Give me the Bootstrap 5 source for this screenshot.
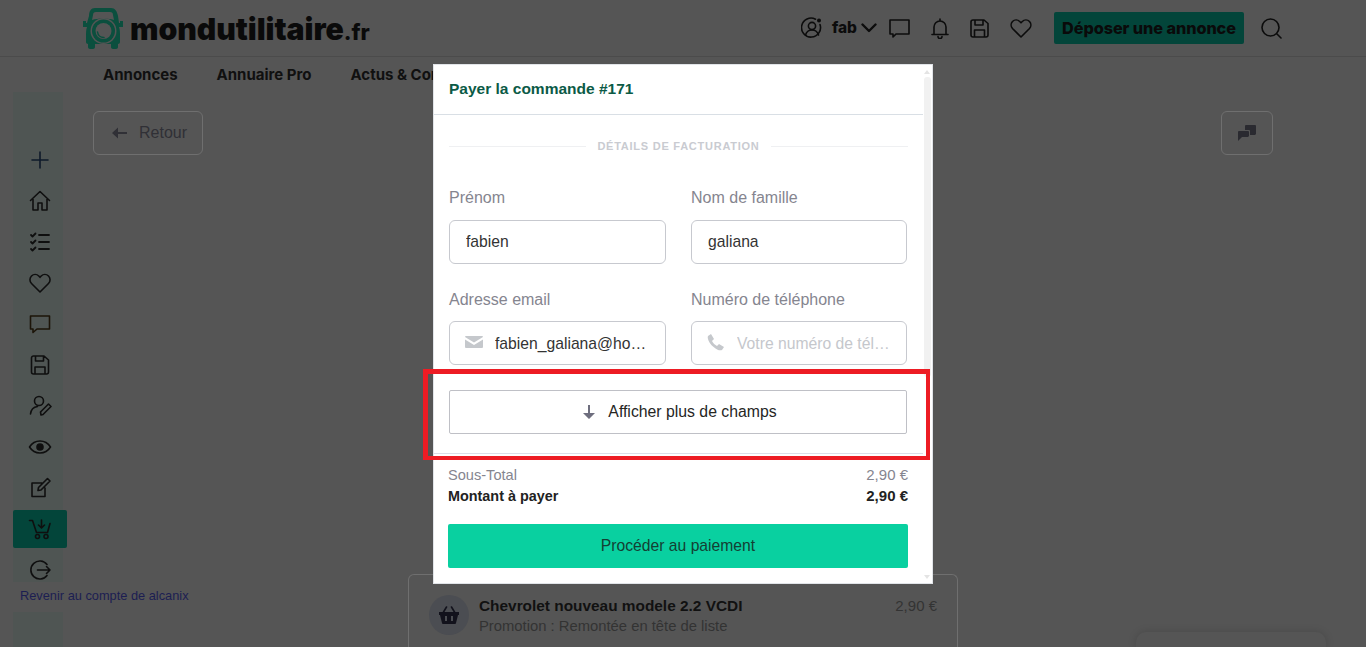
<!DOCTYPE html>
<html lang="fr">
<head>
<meta charset="UTF-8" />
<meta name="viewport" content="width=device-width, initial-scale=1.0" />
<title>Payer la commande</title>
<link href="https://cdn.jsdelivr.net/npm/bootstrap@5.3.0/dist/css/bootstrap.min.css" rel="stylesheet" />
<style>
  html, body { height: 647px; overflow: hidden; }
  body { background: #555; font-family: "Liberation Sans", Arial, sans-serif; color: #0c0c0c; font-size: 16px; }
  svg { display: block; fill: none; stroke: currentColor; stroke-width: 1.6; stroke-linecap: round; stroke-linejoin: round; }

  .top-bar { height: 57px; border-bottom: 1px solid #4b4b4b; padding: 0 84px 0 83px; }
  .logo-word { font-family: Inter, sans-serif; font-weight: 900; font-size: 30.2px; letter-spacing: -.05px; line-height: 1; margin: 3px 0 0 6px; color: #0a0a0a; }
  .logo-word span { font-size: 22px; font-weight: 800; }
  .user-name { font-family: Inter, sans-serif; font-weight: 800; font-size: 15.5px; margin-left: 9px; }
  .post-btn { background: #03453a; color: #0a0a0a; font-family: Inter, sans-serif; font-weight: 800; font-size: 16.3px; height: 32px; width: 190px; border-radius: 2px; letter-spacing: -.1px; padding-top: 1px; }

  .menu-bar { height: 35px; padding: 2px 0 0 103px; gap: 39px; font-family: Inter, sans-serif; font-weight: 700; font-size: 15px; color: #101010; }

  .side-col { width: 50px; margin-left: 13px; flex: none; }
  .side-bar { height: 490px; background: #4f5553; padding-top: 49px; }
  .side-item { height: 38px; width: 54px; margin-bottom: 3px; padding-left: 15px; color: #0f0f0f; border-radius: 2px; }
  .side-item.is-on { background: #03453a; }
  .back-link { display: block; white-space: nowrap; font-size: 12.8px; color: #1c1e52; margin: 6px 0 0 7px; line-height: 15px; text-decoration: none; }
  .side-tail { height: 35px; margin-top: 9px; background: #4f5553; }

  .main-col { padding: 19px 93px 0 30px; height: 555px; }
  .ghost-btn { height: 44px; border: 1px solid #6f6f6f; border-radius: 6px; color: #303036; background: transparent; }
  .ghost-back { width: 110px; padding-left: 18px; gap: 12px; font-size: 16px; }
  .ghost-chat { width: 52px; }
  .order-card { width: 550px; height: 73px; margin: 419px 0 0 315px; border: 1px solid #6f6f6f; border-bottom: 0; border-radius: 6px 6px 0 0; padding: 20px 20px 0 20px; }
  .basket-dot { width: 40px; height: 40px; border-radius: 50%; background: #4b4d52; color: #12121c; margin-right: 10px; flex: none; }
  .order-title { font-weight: 700; font-size: 15.4px; line-height: 21px; color: #111; }
  .order-sub { font-size: 14.8px; line-height: 20px; color: #333; }
  .order-price { font-size: 15px; color: #333; line-height: 21px; }
  .chat-peek { position: fixed; left: 1136px; top: 632px; width: 190px; height: 15px; border-radius: 10px 10px 0 0; background: #555; box-shadow: 0 0 8px rgba(0,0,0,.16); }

  .pay-modal { position: fixed; left: 433px; top: 64px; width: 500px; height: 520px; background: #fff; border: 1px solid #e1e4e8; }
  .pay-head { height: 50px; width: 489px; border-bottom: 1px solid #d9dfe5; padding: 0 0 2px 15px; font-weight: 700; font-size: 15.5px; color: #0b5a46; }
  .pay-body { padding: 0 24px 0 15px; width: 498px; }
  .split-title { height: 63px; gap: 11px; font-size: 11px; font-weight: 700; letter-spacing: .75px; color: #c9cbd1; white-space: nowrap; }
  .split-title i { flex: 1; height: 1px; background: #eff0f2; }
  .field-grid { display: grid; grid-template-columns: 217px 216px; column-gap: 25px; }
  .field-label { font-size: 16px; color: #85858f; line-height: 20px; margin: 10px 0 12px; }
  .field-row2 .field-label { margin: 26px 0 11px; }
  .field-box { height: 44px; border-radius: 6px; border: 1px solid #c7c9cf; padding: 0 16px; color: #333; font-size: 15.7px; box-shadow: none; text-overflow: ellipsis; font-family: inherit; }
  .field-box.has-ico { padding: 1px 16px 0 45px; }
  .field-box::placeholder { color: #c5c7cc; opacity: 1; }
  .field-ico { position: absolute; left: 16px; top: 14px; color: #c5c8cc; }
  .more-btn { height: 44px; width: 458px; margin-top: 25px; padding-left: 10px; background: #fff; border: 1px solid #bfc0c6; border-radius: 2px; color: #26261f; font-size: 15.8px; gap: 13px; }
  .pay-rule { height: 1px; width: 489px; margin-top: 19px; background: #dcdee8; }
  .sum-block { padding: 11px 24px 0 14px; font-size: 14.6px; line-height: 21px; width: 498px; }
  .sum-muted { color: #85858f; }
  .sum-muted span:last-child { font-size: 15px; margin-top: -1px; }
  .sum-strong { font-weight: 700; font-size: 14.4px; color: #222; }
  .sum-strong span:last-child { font-size: 15px; margin-top: -1px; }
  .go-btn { height: 44px; width: 460px; margin-top: 17px; background: #09d0a0; border-radius: 2px; color: #143f33; font-size: 15.7px; border: 0; padding-bottom: 3px; }
  .bar-thumb { position: absolute; right: 1px; top: 12px; width: 7px; height: 300px; background: #f1f1f1; border-radius: 3px; }
  .bar-arrow { position: absolute; right: 2px; width: 0; height: 0; border-left: 3px solid transparent; border-right: 3px solid transparent; }
  .bar-up { top: 5px; border-bottom: 4px solid #e4e4e4; }
  .bar-down { bottom: 4px; border-top: 4px solid #e4e4e4; }
  .red-frame { position: fixed; left: 423px; top: 369px; width: 507px; height: 91px; border: 5px solid #ed1c24; border-width: 5px 4px 4px 5px; pointer-events: none; }
</style>
</head>
<body>
  <!-- page behind the modal -->
  <header class="top-bar d-flex align-items-center">
    <svg width="41" height="42" viewBox="0 0 41 42" style="stroke:none;fill:#0b4f3e">
      <path d="M6 9C6 4 8 1 12 1h16c4 0 6 3 7 8l1 7h1v-2h3v6h-4c1 3 1 6 1 9v6c0 1-1 2-2 2v3c0 1-1 2-2 2h-3c-1 0-2-1-2-2v-3H12v3c0 1-1 2-2 2H7c-1 0-2-1-2-2v-3c-1 0-2-1-2-2v-6c0-3 0-6 1-9H0v-6h3v2h1z"/>
      <path d="M10 8c0-2 1-3 3-3h14c2 0 3 1 3 3l1 5c-6-2-16-2-22 0z" fill="#555"/>
      <circle cx="20.500" cy="24" r="13" fill="#555"/>
      <circle cx="20.500" cy="24" r="11.500" fill="#0b4f3e"/>
      <circle cx="20.500" cy="24" r="8" fill="#555"/>
      <path d="M14.500 25c.5 3.500 3 5.500 6.500 5.500" fill="none" stroke="#0b4f3e" stroke-width="1.500"/>
    </svg>
    <div class="logo-word">mondutilitaire<span>.fr</span></div>
    <div class="d-flex align-items-center ms-auto">
      <svg width="22" height="22" viewBox="0 0 22 22"><path d="M19 7.500A9.500 9.500 0 1 1 14.500 2.200"/><circle cx="11" cy="9" r="3.600"/><path d="M4.500 18c1-3.500 3.500-5 6.500-5s5.500 1.500 6.500 5"/><circle cx="18" cy="3.500" r="2" fill="currentColor" stroke="none"/></svg>
      <span class="user-name">fab</span>
      <svg class="ms-1" width="16" height="10" viewBox="0 0 16 10" style="stroke-width:2.400"><path d="M1.500 1.500 8 8l6.500-6.500"/></svg>
      <svg style="margin-left:12px" width="21" height="19" viewBox="0 0 21 19"><path d="M1 1h19v14H7l-3 3v-3H1z"/></svg>
      <svg style="margin-left:21px" width="18" height="21" viewBox="0 0 18 21"><path d="M3 16V9a6 6 0 0 1 12 0v7M1 16.500h16M7 18.500a2 2 0 0 0 4 0M9 1v2"/></svg>
      <svg style="margin-left:21px" width="19" height="19" viewBox="0 0 19 19"><path d="M1 3a2 2 0 0 1 2-2h11l4 3.500V16a2 2 0 0 1-2 2H3a2 2 0 0 1-2-2zM5 1v5h8V1M4.500 18v-7h10v7"/></svg>
      <svg style="margin-left:21px" width="22" height="19" viewBox="0 0 22 19"><path d="M11 18 2.500 9.500a5.200 5.200 0 0 1 0-7 5.200 5.200 0 0 1 7.200 0L11 3.800l1.300-1.300a5.200 5.200 0 0 1 7.200 0 5.200 5.200 0 0 1 0 7z"/></svg>
      <div class="post-btn d-flex align-items-center justify-content-center" style="margin-left:22px">Déposer une annonce</div>
      <svg style="margin-left:17px" width="21" height="21" viewBox="0 0 21 21"><circle cx="9.500" cy="9.500" r="8.500"/><path d="m16 16 4 4"/></svg>
    </div>
  </header>

  <nav class="menu-bar d-flex align-items-center">
    <span>Annonces</span>
    <span>Annuaire Pro</span>
    <span>Actus &amp; Conseils</span>
  </nav>

  <div class="d-flex">
    <aside class="side-col">
      <div class="side-bar">
        <div class="side-item d-flex align-items-center"><svg width="24" height="24" viewBox="0 0 24 24" style="color:#0e1a2a"><path d="M12 4v16M4 12h16"/></svg></div>
        <div class="side-item d-flex align-items-center"><svg width="24" height="24" viewBox="0 0 24 24"><path d="M2.500 11.500 12 2.500l9.500 9M5 10v11h5v-7h4v7h5V10"/></svg></div>
        <div class="side-item d-flex align-items-center"><svg width="24" height="24" viewBox="0 0 24 24" style="stroke-width:1.800"><path d="M11 5h10M11 12h10M11 19h10M3 5l1.500 1.500L7.500 3.500M3 12l1.500 1.500 3-3M3 19l1.500 1.500 3-3"/></svg></div>
        <div class="side-item d-flex align-items-center"><svg width="24" height="24" viewBox="0 0 24 24"><path d="M12 21 3.500 12.500a5.300 5.300 0 0 1 0-7.500 5.300 5.300 0 0 1 7.300 0L12 6.300 13.200 5a5.300 5.300 0 0 1 7.300 0 5.300 5.300 0 0 1 0 7.500z"/></svg></div>
        <div class="side-item d-flex align-items-center"><svg width="24" height="24" viewBox="0 0 24 24" style="color:#1c1408"><path d="M2.500 4h19v13H9l-4 3.500V17H2.500z"/></svg></div>
        <div class="side-item d-flex align-items-center"><svg width="24" height="24" viewBox="0 0 24 24"><path d="M3.500 5a2 2 0 0 1 2-2h10.500l4.500 4v12a2 2 0 0 1-2 2h-13a2 2 0 0 1-2-2zM7.500 3v5h8V3M7 21v-7h10v7"/></svg></div>
        <div class="side-item d-flex align-items-center"><svg width="24" height="24" viewBox="0 0 24 24"><circle cx="11" cy="7" r="4.500"/><path d="M2.500 20c.5-4.500 3-7 7-7.500M13 21l-.5-3 8-8 2.500 2.500-8 8z"/></svg></div>
        <div class="side-item d-flex align-items-center"><svg width="24" height="24" viewBox="0 0 24 24"><path d="M1.500 12C4 8 8 6 12 6s8 2 10.500 6C20 16 16 18 12 18s-8-2-10.500-6z"/><circle cx="12" cy="12" r="3" fill="currentColor"/></svg></div>
        <div class="side-item d-flex align-items-center"><svg width="24" height="24" viewBox="0 0 24 24"><path d="M17 12v8.500H4V7h10M10 14.500l.5-3L19.500 2.500 22 5l-9 9z"/></svg></div>
        <div class="side-item is-on d-flex align-items-center"><svg width="24" height="24" viewBox="0 0 24 24"><path d="M1.500 3.500h3l4 12h11l2.500-9M13.500 3v7M10.500 8l3 3 3-3"/><circle cx="9.500" cy="19.500" r="2"/><circle cx="18" cy="19.500" r="2"/></svg></div>
        <div class="side-item d-flex align-items-center"><svg width="24" height="24" viewBox="0 0 24 24"><path d="M19 6.500A9 9 0 1 0 19 17.500M9.500 12H22M18.500 8.500 22 12l-3.500 3.500"/></svg></div>
      </div>
      <a class="back-link" href="#">Revenir au compte de alcanix</a>
      <div class="side-tail"></div>
    </aside>

    <main class="main-col flex-grow-1">
      <div class="d-flex justify-content-between">
        <div class="ghost-btn ghost-back d-flex align-items-center">
          <svg width="15" height="12" viewBox="0 0 15 12" style="stroke:none;fill:currentColor"><path d="M0 6 6 .5V5h9v2H6v4.500z"/></svg>
          <span>Retour</span>
        </div>
        <div class="ghost-btn ghost-chat d-flex align-items-center justify-content-center">
          <svg width="18" height="16" viewBox="0 0 18 16" style="stroke:none;fill:#2a2a30"><path d="M7 1a1 1 0 0 1 1-1h9a1 1 0 0 1 1 1v8l-1 1h-5V6a1 1 0 0 0-1-1H7z"/><path d="M1 6h9a1 1 0 0 1 1 1v4l-1 1H4l-4 4V7a1 1 0 0 1 1-1z"/></svg>
        </div>
      </div>
      <div class="order-card d-flex">
        <div class="basket-dot d-flex align-items-center justify-content-center">
          <svg width="20" height="18" viewBox="0 0 20 18" style="stroke:none;fill:currentColor"><path d="M0 6h20v3h-1l-2 8a1 1 0 0 1-1 1H4a1 1 0 0 1-1-1L1 9H0zM6 10v5h2v-5zM12 10v5h2v-5z" fill-rule="evenodd"/><path d="m4.500 6 3-5M15.500 6l-3-5" fill="none" stroke="currentColor" stroke-width="1.600"/></svg>
        </div>
        <div class="flex-grow-1">
          <div class="order-title">Chevrolet nouveau modele 2.2 VCDI</div>
          <div class="order-sub">Promotion : Remontée en tête de liste</div>
        </div>
        <div class="order-price">2,90 €</div>
      </div>
    </main>
  </div>
  <div class="chat-peek"></div>

  <!-- payment modal -->
  <section class="pay-modal">
    <div class="pay-head d-flex align-items-center">Payer la commande #171</div>
    <div class="pay-body">
      <div class="split-title d-flex align-items-center"><i></i><span>DÉTAILS DE FACTURATION</span><i></i></div>
      <div class="field-grid">
        <div>
          <div class="field-label">Prénom</div>
          <input class="form-control field-box" type="text" value="fabien" />
        </div>
        <div>
          <div class="field-label">Nom de famille</div>
          <input class="form-control field-box" type="text" value="galiana" />
        </div>
        <div class="field-row2">
          <div class="field-label">Adresse email</div>
          <div class="position-relative">
            <svg class="field-ico" width="18" height="16" viewBox="0 0 18 16" style="stroke:none;fill:currentColor"><path d="M1 1h16a1 1 0 0 1 1 1L9 7.500 0 2a1 1 0 0 1 1-1z"/><path d="M0 4.500 9 10l9-5.500V12a1 1 0 0 1-1 1H1a1 1 0 0 1-1-1z"/></svg>
            <input class="form-control field-box has-ico" type="text" value="fabien_galiana@hotmail.fr" />
          </div>
        </div>
        <div class="field-row2">
          <div class="field-label">Numéro de téléphone</div>
          <div class="position-relative">
            <svg class="field-ico" width="17" height="17" viewBox="0 0 17 17" style="stroke:none;fill:currentColor;margin-top:-1px"><path d="M1 2 4 0l3 5-2 2c1 2 3 4 5 5l2-2 5 3-2 3c-2 1-5 0-9-3.500S0 4 1 2z"/></svg>
            <input class="form-control field-box has-ico" type="text" placeholder="Votre numéro de téléphone" />
          </div>
        </div>
      </div>
      <button class="more-btn d-flex align-items-center justify-content-center" type="button">
        <svg width="12" height="15" viewBox="0 0 12 15" style="stroke:none;fill:#6e6e7e"><path d="M5 0h2v8h5l-6 6-6-6h5z"/></svg>
        <span>Afficher plus de champs</span>
      </button>
    </div>
    <div class="pay-rule"></div>
    <div class="sum-block">
      <div class="d-flex justify-content-between sum-muted"><span>Sous-Total</span><span>2,90 €</span></div>
      <div class="d-flex justify-content-between sum-strong"><span>Montant à payer</span><span>2,90 €</span></div>
      <button class="go-btn d-flex align-items-center justify-content-center" type="button">Procéder au paiement</button>
    </div>
    <div class="bar-arrow bar-up"></div>
    <div class="bar-thumb"></div>
    <div class="bar-arrow bar-down"></div>
  </section>
  <div class="red-frame"></div>

  <script src="https://cdn.jsdelivr.net/npm/bootstrap@5.3.0/dist/js/bootstrap.bundle.min.js"></script>
</body>
</html>
